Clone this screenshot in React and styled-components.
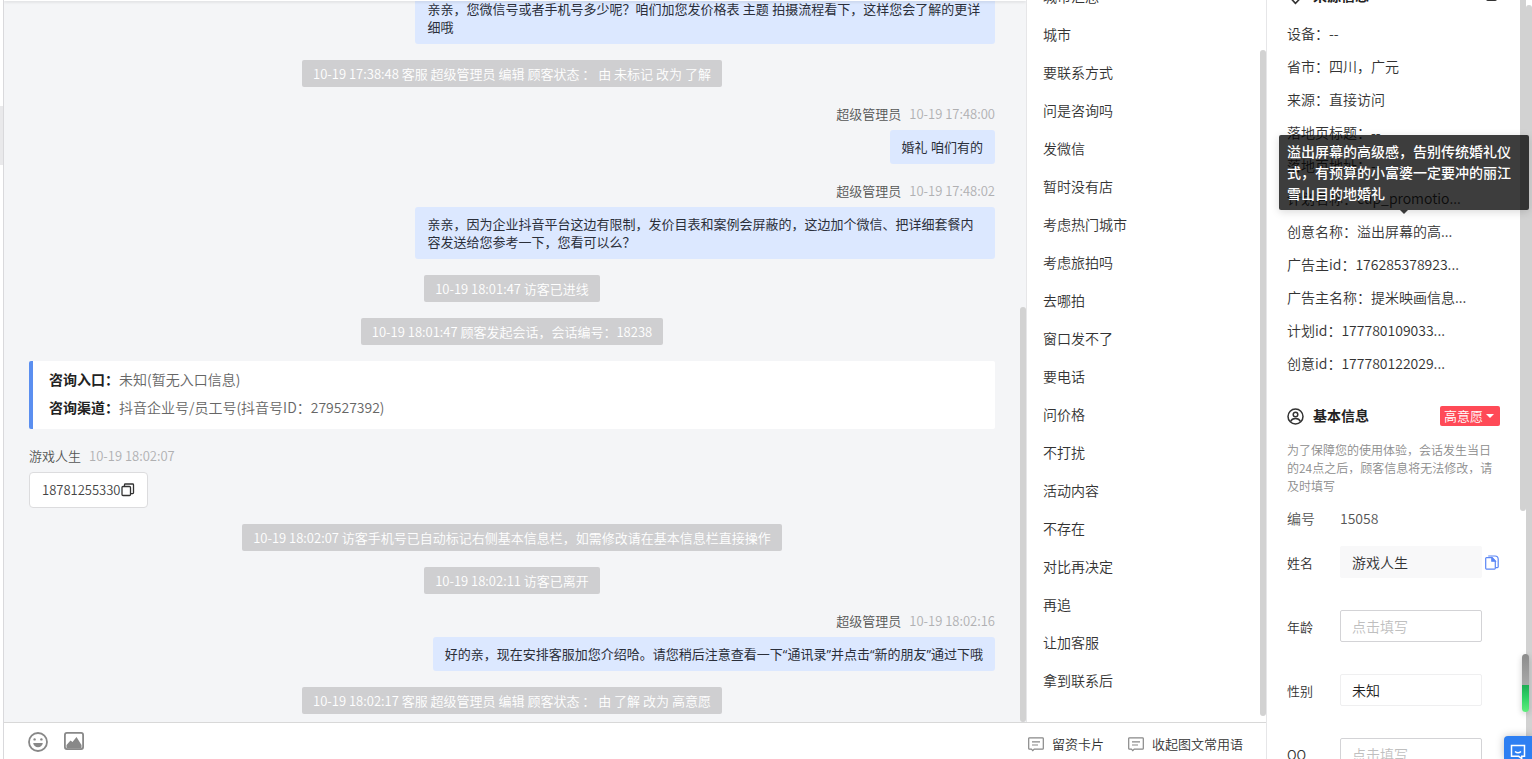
import React, { useLayoutEffect, useRef, useState } from 'react';
import styled, { createGlobalStyle } from 'styled-components';

const messages = [
  { type: 'staff', text: '亲亲，您微信号或者手机号多少呢？咱们加您发价格表 主题 拍摄流程看下，这样您会了解的更详细哦' },
  { type: 'system', text: '10-19 17:38:48 客服 超级管理员 编辑 顾客状态 ： 由 未标记 改为 了解' },
  { type: 'staff', name: '超级管理员', time: '10-19 17:48:00', text: '婚礼 咱们有的' },
  { type: 'staff', name: '超级管理员', time: '10-19 17:48:02', text: '亲亲，因为企业抖音平台这边有限制，发价目表和案例会屏蔽的，这边加个微信、把详细套餐内容发送给您参考一下，您看可以么？' },
  { type: 'system', text: '10-19 18:01:47 访客已进线' },
  { type: 'system', text: '10-19 18:01:47 顾客发起会话，会话编号：18238' },
  { type: 'entry' },
  { type: 'visitor', name: '游戏人生', time: '10-19 18:02:07', text: '18781255330' },
  { type: 'system', text: '10-19 18:02:07 访客手机号已自动标记右侧基本信息栏，如需修改请在基本信息栏直接操作' },
  { type: 'system', text: '10-19 18:02:11 访客已离开' },
  { type: 'staff', name: '超级管理员', time: '10-19 18:02:16', text: '好的亲，现在安排客服加您介绍哈。请您稍后注意查看一下“通讯录”并点击“新的朋友”通过下哦' },
  { type: 'system', text: '10-19 18:02:17 客服 超级管理员 编辑 顾客状态 ： 由 了解 改为 高意愿' },
];

const phrases = [
  '城市汇总', '城市', '要联系方式', '问是咨询吗', '发微信', '暂时没有店', '考虑热门城市',
  '考虑旅拍吗', '去哪拍', '窗口发不了', '要电话', '问价格', '不打扰', '活动内容',
  '不存在', '对比再决定', '再追', '让加客服', '拿到联系后',
];

const source = [
  { label: '设备', value: '--' },
  { label: '省市', value: '四川，广元' },
  { label: '来源', value: '直接访问' },
  { label: '落地页标题', value: '--' },
  { label: '落地页地址', value: '--' },
  { label: '计划名称', value: 'cup_promotio...' },
  { label: '创意名称', value: '溢出屏幕的高...', tip: '溢出屏幕的高级感，告别传统婚礼仪式，有预算的小富婆一定要冲的丽江雪山目的地婚礼' },
  { label: '广告主id', value: '176285378923...' },
  { label: '广告主名称', value: '提米映画信息...' },
  { label: '计划id', value: '177780109033...' },
  { label: '创意id', value: '177780122029...' },
];

function CopyIcon() {
  return (
    <svg width="14" height="14" viewBox="0 0 14 14" fill="none" stroke="#333" strokeWidth="1.3">
      <rect x="1" y="3.5" width="8.5" height="9" rx="1" />
      <path d="M3.500 3.500V1.800a.8.800 0 0 1 .8-.8h7.400a.8.800 0 0 1 .8.800v8a.8.800 0 0 1-.8.800H9.500" />
    </svg>
  );
}

function PagesIcon() {
  return (
    <svg width="14" height="15" viewBox="0 0 14 15" fill="none" stroke="#5b86f5" strokeWidth="1.2">
      <path d="M1.500 2.700h5.700L10.300 6v7.300a.8.800 0 0 1-.8.800h-8a.8.800 0 0 1-.8-.8V3.500a.8.800 0 0 1 .8-.8z" />
      <path d="M6.800 2.900V6.200h3.400z" fill="#5b86f5" />
      <path d="M3.200 1h6.800a3.200 3.200 0 0 1 3.200 3.200v7.600a.8.800 0 0 1-.8.800h-2" />
    </svg>
  );
}

function CardIcon() {
  return (
    <svg width="16" height="16" viewBox="0 0 16 16" fill="none" stroke="#888" strokeWidth="1.2">
      <path d="M1.500 1.800h13a.8.8 0 0 1 .8.800v9.800a.8.800 0 0 1-.8.800H6.200L4.800 14.600 3.400 13.200H1.500a.8.800 0 0 1-.8-.8V2.600a.8.800 0 0 1 .8-.8z" />
      <path d="M4 5.800h8M4 9h6" />
    </svg>
  );
}

function SmileIcon() {
  return (
    <svg width="20" height="20" viewBox="0 0 20 20" fill="none">
      <circle cx="10" cy="10" r="9" stroke="#888" strokeWidth="1.800" />
      <circle cx="6.600" cy="7.400" r="1.200" fill="#888" />
      <circle cx="13.400" cy="7.400" r="1.200" fill="#888" />
      <path d="M5.200 11h9.600c-.3 2.600-2.300 4.200-4.800 4.200S5.500 13.600 5.200 11z" fill="#888" />
    </svg>
  );
}

function ImageIcon() {
  return (
    <svg width="20" height="20" viewBox="0 0 20 20" fill="none">
      <rect x="0.900" y="0.900" width="18.200" height="16.200" rx="2" stroke="#888" strokeWidth="1.800" />
      <path d="M2.500 13 6.500 8.500l2 1.500 4-5 5 8v3.500h-15z" fill="#888" />
    </svg>
  );
}

function PinIcon() {
  return (
    <svg width="17" height="17" viewBox="0 0 16 16" fill="none" stroke="#333" strokeWidth="1.500">
      <path d="M8 14.500 3.800 10a6 6 0 1 1 8.400 0z" />
      <circle cx="8" cy="6" r="2" />
    </svg>
  );
}

function UserIcon() {
  return (
    <svg width="17" height="17" viewBox="0 0 17 17" fill="none" stroke="#333" strokeWidth="1.500">
      <circle cx="8.500" cy="8.500" r="7.500" />
      <circle cx="8.500" cy="6.500" r="2.300" />
      <path d="M3.600 13.500c.8-2 2.600-3 4.900-3s4.100 1 4.900 3" />
    </svg>
  );
}

function Message({ item }) {
  if (item.type === 'system') {
    return <SystemNote>{item.text}</SystemNote>;
  }
  if (item.type === 'entry') {
    return (
      <EntryCard>
        <p><b>咨询入口：</b>未知(暂无入口信息)</p>
        <p><b>咨询渠道：</b>抖音企业号/员工号(抖音号ID：279527392)</p>
      </EntryCard>
    );
  }
  const visitor = item.type === 'visitor';
  return (
    <MessageBox $visitor={visitor}>
      {item.name && (
        <Sender>
          <span>{item.name}</span>
          <time>{item.time}</time>
        </Sender>
      )}
      {visitor ? (
        <VisitorBubble>
          {item.text}
          <IconButton aria-label="复制"><CopyIcon /></IconButton>
        </VisitorBubble>
      ) : (
        <Bubble>{item.text}</Bubble>
      )}
    </MessageBox>
  );
}

function App() {
  const [name, setName] = useState('游戏人生');
  const [age, setAge] = useState('');
  const [gender, setGender] = useState('未知');
  const [qq, setQq] = useState('');
  const sideRef = useRef(null);

  useLayoutEffect(() => {
    sideRef.current.scrollTop = 25;
  }, []);

  return (
    <Page>
      <GlobalStyle />
      <Edge><span /></Edge>

      <Workspace>
        <Columns>
          <Chat>
            {messages.map((item, i) => <Message key={i} item={item} />)}
            <Thumb $top="307px" $bottom="0" />
          </Chat>
          <Phrases>
            <ul>
              {phrases.map((p) => <li key={p}>{p}</li>)}
            </ul>
            <Thumb $top="50px" $bottom="6px" />
          </Phrases>
        </Columns>
        <Toolbar>
          <IconButton aria-label="表情"><SmileIcon /></IconButton>
          <IconButton aria-label="图片"><ImageIcon /></IconButton>
          <ToolLinks>
            <ToolButton><CardIcon />留资卡片</ToolButton>
            <ToolButton><CardIcon />收起图文常用语</ToolButton>
          </ToolLinks>
        </Toolbar>
      </Workspace>

      <Side>
        <SideScroll ref={sideRef}>
          <SectionTitle>
            <PinIcon />
            <h2>来源信息</h2>
            <Collapse aria-label="收起" />
          </SectionTitle>
          {source.map((row) => (
            <SourceRow key={row.label}>
              {row.label}：{row.value}
              {row.tip && <Tooltip role="tooltip">{row.tip}</Tooltip>}
            </SourceRow>
          ))}

          <SectionTitle $spaced>
            <UserIcon />
            <h2>基本信息</h2>
            <StatusButton>高意愿<i /></StatusButton>
          </SectionTitle>
          <Notice>为了保障您的使用体验，会话发生当日的24点之后，顾客信息将无法修改，请及时填写</Notice>
          <NumberRow><span>编号</span><span>15058</span></NumberRow>
          <Form onSubmit={(e) => e.preventDefault()}>
            <Field>
              <label htmlFor="name">姓名</label>
              <Input id="name" $filled value={name} onChange={(e) => setName(e.target.value)} />
              <IconButton type="button" aria-label="复制姓名"><PagesIcon /></IconButton>
            </Field>
            <Field>
              <label htmlFor="age">年龄</label>
              <Input id="age" placeholder="点击填写" value={age} onChange={(e) => setAge(e.target.value)} />
            </Field>
            <Field>
              <label htmlFor="gender">性别</label>
              <Select id="gender" value={gender} onChange={(e) => setGender(e.target.value)}>
                <option value="未知">未知</option>
                <option value="男">男</option>
                <option value="女">女</option>
              </Select>
            </Field>
            <Field>
              <label htmlFor="qq">QQ</label>
              <Input id="qq" placeholder="点击填写" value={qq} onChange={(e) => setQq(e.target.value)} />
            </Field>
          </Form>
        </SideScroll>
        <SideThumb />
        <PageThumb />
        <Meter />
        <ServiceButton aria-label="在线客服">
          <svg width="16" height="16" viewBox="0 0 16 16" fill="none" stroke="#fff" strokeWidth="1.500">
            <path d="M1.500 1.500h13v10.800h-2.800v2.200l-3-2.200H1.500z" />
            <path d="M5 7.500c1.800 1.600 4.200 1.600 6 0" />
          </svg>
        </ServiceButton>
      </Side>
    </Page>
  );
}

const GlobalStyle = createGlobalStyle`
  * {
    box-sizing: border-box;
  }
  body {
    margin: 0;
    background: #fff;
    color: #333;
    font-family: "Noto Sans CJK SC", sans-serif;
    font-size: 14px;
    font-weight: 350;
  }
  button, input, select {
    font-family: inherit;
    font-weight: inherit;
  }
  h2, p, ul {
    margin: 0;
    padding: 0;
  }
  svg {
    display: block;
    flex-shrink: 0;
  }
`;

const Page = styled.div`
  display: flex;
  height: 100vh;
  overflow: hidden;
`;

const Edge = styled.div`
  width: 4px;
  flex-shrink: 0;
  padding-top: 106px;
  border-right: 1px solid #d9d9dc;

  span{
    display: block;
    height: 59px;
    background: #e9e9eb;
  }
`;

const Workspace = styled.main`
  flex: 1;
  min-width: 0;
  display: flex;
  flex-direction: column;
`;

const Columns = styled.div`
  flex: 1;
  min-height: 0;
  display: flex;
`;

const Chat = styled.section`
  position: relative;
  flex: 1;
  min-width: 0;
  display: flex;
  flex-direction: column;
  justify-content: flex-end;
  align-items: center;
  gap: 16px;
  padding: 0 31px 8px 25px;
  overflow: hidden;
  background: #f4f5f7;
  font-size: 13px;
  line-height: 18px;

  &::before{
    content: "";
    position: absolute;
    top: 0;
    left: 0;
    right: 0;
    height: 1px;
    background: #fff;
    box-shadow: 0 1px 3px rgba(0, 0, 0, 0.2);
  }
`;

const SystemNote = styled.div`
  flex-shrink: 0;
  padding: 0 11px;
  border-radius: 2px;
  background: #cfcfd1;
  color: #fff;
  line-height: 27px;
`;

const MessageBox = styled.article`
  align-self: stretch;
  flex-shrink: 0;
  display: flex;
  flex-direction: column;
  align-items: ${(p) => (p.$visitor ? 'flex-start' : 'flex-end')};
`;

const Sender = styled.div`
  display: flex;
  gap: 8px;
  padding: 2px 0 7px;
  color: #555;

  time{
    color: #b0b0b2;
  }
`;

const Bubble = styled.div`
  max-width: 60%;
  padding: 8px 12px;
  border-radius: 3px;
  background: #dce8ff;
  color: #2b2f3a;
  font-family: "Open Sans", "Noto Sans CJK SC", sans-serif;
  font-weight: 400;
`;

const VisitorBubble = styled.div`
  display: flex;
  align-items: center;
  padding: 8px 12px;
  border: 1px solid #dcdcde;
  border-radius: 4px;
  background: #fff;
  color: #444;
`;

const EntryCard = styled.div`
  align-self: stretch;
  flex-shrink: 0;
  padding: 4px 16px 8px;
  border-left: 4px solid #5b8ff0;
  border-radius: 2px;
  background: #fff;
  color: #666;
  font-size: 14px;
  line-height: 28px;

  b{
    color: #222;
    font-weight: 700;
  }
`;

const Thumb = styled.div`
  position: absolute;
  right: 0;
  top: ${(p) => p.$top};
  bottom: ${(p) => p.$bottom};
  width: 6px;
  border-radius: 3px;
  background: #d2d2d2;
`;

const Phrases = styled.section`
  position: relative;
  width: 240px;
  flex-shrink: 0;
  display: flex;
  flex-direction: column;
  justify-content: flex-end;
  padding: 0 16px 23px;
  border-left: 1px solid #e6e6e8;
  overflow: hidden;

  ul{
    list-style: none;
  }

  li{
    line-height: 38px;
  }
`;

const Toolbar = styled.div`
  height: 37px;
  flex-shrink: 0;
  display: flex;
  align-items: center;
  gap: 16px;
  padding: 2px 23px 0 24px;
  border-top: 1px solid #d8d8d8;
`;

const IconButton = styled.button`
  padding: 0;
  border: 0;
  background: none;
  cursor: pointer;
`;

const ToolLinks = styled.div`
  display: flex;
  gap: 24px;
  margin-left: auto;
  padding-top: 4px;
`;

const ToolButton = styled(IconButton)`
  display: flex;
  align-items: center;
  gap: 8px;
  color: #333;
  font-size: 13px;
  line-height: 20px;
`;

const Side = styled.aside`
  position: relative;
  width: 266px;
  flex-shrink: 0;
  border-left: 1px solid #e6e6e8;
`;

const SideScroll = styled.div`
  position: relative;
  z-index: 1;
  height: 100%;
  padding: 0 32px 24px 20px;
  overflow: hidden;
`;

const SectionTitle = styled.div`
  display: flex;
  align-items: center;
  gap: 9px;
  height: 42px;
  margin-top: ${(p) => (p.$spaced ? '15px' : '0')};

  h2{
    flex: 1;
    padding-bottom: 2px;
    color: #222;
    font-size: 14px;
    line-height: 20px;
  }
`;

const Collapse = styled.button`
  width: 11px;
  height: 9px;
  margin-right: 3px;
  padding: 0;
  border: 2px solid #333;
  border-radius: 2px;
  background: none;
`;

const SourceRow = styled.div`
  position: relative;
  line-height: 33px;
  white-space: nowrap;
`;

const Tooltip = styled.div`
  position: absolute;
  left: -8px;
  bottom: calc(100% + 5px);
  width: 250px;
  padding: 6px 8px;
  border-radius: 2px;
  background: rgba(0, 0, 0, 0.76);
  box-shadow: 0 2px 8px rgba(0, 0, 0, 0.15);
  color: #fff;
  font-weight: 500;
  line-height: 21px;
  white-space: normal;

  &::after{
    content: "";
    position: absolute;
    top: 100%;
    left: 50%;
    margin-left: -4px;
    border: 4px solid transparent;
    border-top-color: rgba(0, 0, 0, 0.76);
    border-bottom: 0;
  }
`;

const StatusButton = styled.button`
  display: flex;
  align-items: center;
  gap: 3px;
  height: 20px;
  padding: 0 6px 0 4px;
  border: 0;
  border-radius: 2px;
  background: #ff4a57;
  color: #fff;
  font-size: 13px;
  line-height: 20px;

  i{
    border: 4px solid transparent;
    border-top-color: #fff;
    border-bottom: 0;
  }
`;

const Notice = styled.p`
  margin-top: 4px;
  color: #8c8c8c;
  font-size: 12px;
  line-height: 18px;
`;

const NumberRow = styled.div`
  display: grid;
  grid-template-columns: 53px 1fr;
  margin-top: 7px;
  color: #555;
  line-height: 32px;
`;

const Form = styled.form`
  display: flex;
  flex-direction: column;
  gap: 32px;
  margin-top: 12px;
`;

const Field = styled.div`
  display: grid;
  grid-template-columns: 53px 142px 14px;
  align-items: center;
  height: 32px;

  label{
    font-size: 13px;
  }

  button{
    margin-left: 3px;
  }
`;

const Input = styled.input`
  width: 100%;
  height: 32px;
  padding: 0 11px;
  border: 1px solid ${(p) => (p.$filled ? '#f8f8f9' : '#d3d3d6')};
  border-radius: 2px;
  background: ${(p) => (p.$filled ? '#f8f8f9' : '#fff')};
  color: #333;
  font-size: 14px;

  &::placeholder{
    color: #bfbfbf;
  }
`;

const Select = styled.select`
  width: 100%;
  height: 32px;
  padding: 0 11px;
  border: 1px solid #efeff0;
  border-radius: 2px;
  background: #fff;
  color: #222;
  font-size: 14px;
  appearance: none;
`;

const SideThumb = styled.div`
  position: absolute;
  top: 0;
  right: 6px;
  width: 6px;
  height: 511px;
  border-radius: 0 0 3px 3px;
  background: #d2d2d2;
`;

const PageThumb = styled.div`
  position: absolute;
  top: 5px;
  right: 0;
  bottom: 0;
  width: 6px;
  border-radius: 3px 3px 0 0;
  background: #d2d2d2;
`;

const Meter = styled.div`
  position: absolute;
  z-index: 2;
  right: 3px;
  bottom: 47px;
  width: 7px;
  height: 58px;
  border-radius: 4px;
  background: linear-gradient(#8c8c8c, #a8a8a8 54%, #1fae55 54%, #2fd165 75%, #5fee7c);
  box-shadow: 0 2px 6px rgba(0, 0, 0, 0.2);
`;

const ServiceButton = styled.button`
  position: absolute;
  z-index: 2;
  right: 0;
  bottom: 0;
  width: 28px;
  height: 23px;
  padding: 8px 6px 0;
  border: 0;
  border-radius: 4px 0 0 0;
  background: #2e7ff2;
  box-shadow: 0 0 8px rgba(0, 0, 0, 0.25);
  overflow: hidden;
`;

export default App;
